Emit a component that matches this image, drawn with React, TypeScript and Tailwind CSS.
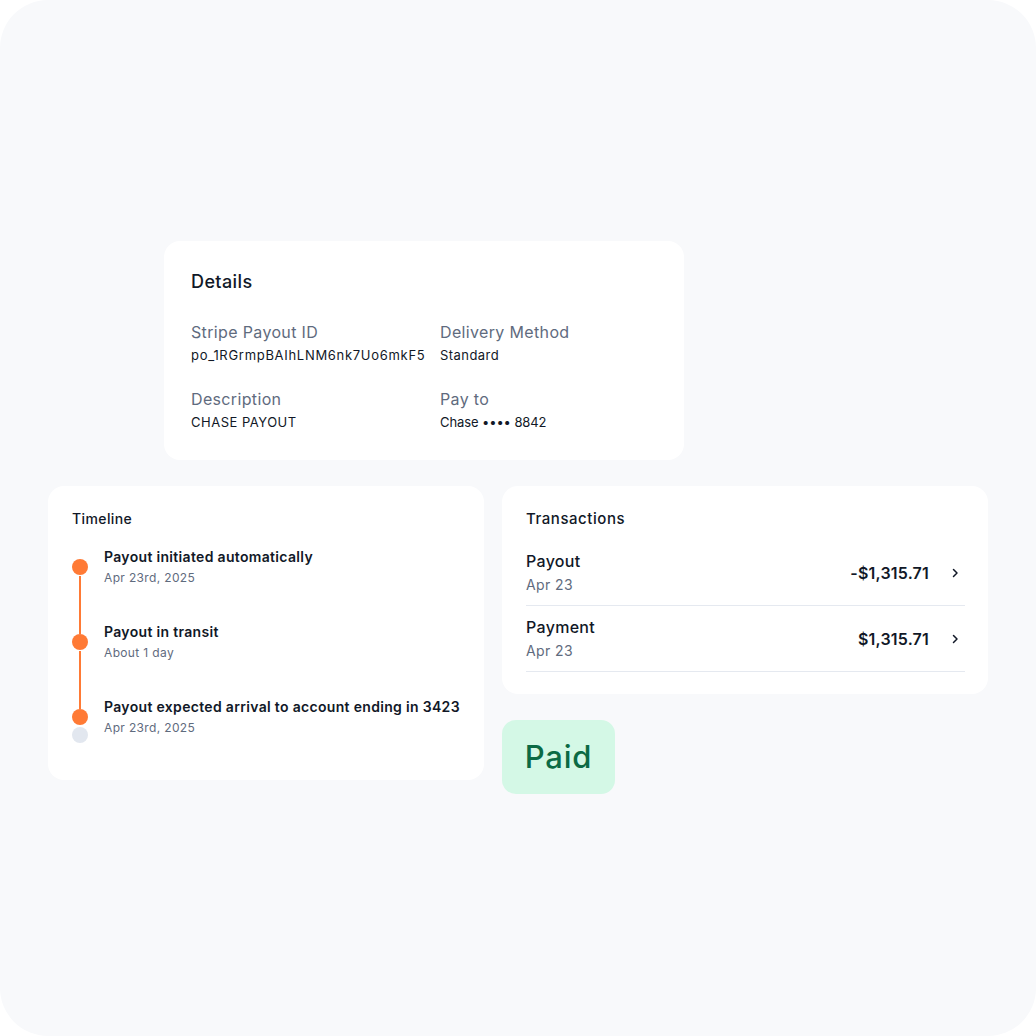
import React from "react";

const font = { fontFamily: "Inter, 'Noto Sans', sans-serif" };

function Chevron() {
  return (
    <svg width="16" height="16" viewBox="0 0 16 16" fill="none" className="ml-[19px] mr-[1px] shrink-0">
      <path d="M5.5 4.5L9 8L5.5 11.5" stroke="#111827" strokeWidth="1.5" strokeLinecap="round" strokeLinejoin="round" />
    </svg>
  );
}

const timeline = [
  { title: "Payout initiated automatically", sub: "Apr 23rd, 2025" },
  { title: "Payout in transit", sub: "About 1 day" },
  { title: "Payout expected arrival to account ending in 3423", sub: "Apr 23rd, 2025" },
];

const txns = [
  { name: "Payout", date: "Apr 23", amount: "-$1,315.71" },
  { name: "Payment", date: "Apr 23", amount: "$1,315.71" },
];

const details: [string, string, string][] = [
  ["Stripe Payout ID", "po_1RGrmpBAIhLNM6nk7Uo6mkF5", "tracking-[0.7px]"],
  ["Delivery Method", "Standard", "tracking-[0.45px]"],
  ["Description", "CHASE PAYOUT", "tracking-[0.5px]"],
  ["Pay to", "Chase •••• 8842", "tracking-[-0.1px]"],
];

export default function App() {
  return (
    <div className="w-[1036px] h-[1036px] bg-white tracking-[0.3px]" style={font}>
      <div className="w-full h-full rounded-[48px] bg-[#f8f9fb] pt-[241px] px-[48px] text-[#111827]">
        <div className="ml-[116px] w-[520px] h-[219px] rounded-[16px] bg-white pt-[29px] pl-[27px]">
          <div className="text-[18px] leading-[24px] font-medium tracking-[0.4px]">Details</div>
          <div className="mt-[27px] grid grid-cols-[249px_1fr] gap-y-[24px]">
            {details.map(([l, v, tr]) => (
              <div key={l}>
                <div className="text-[16px] leading-[22px] text-[#5f6b7e] tracking-[0.35px]">{l}</div>
                <div className={"mt-[3px] text-[13px] leading-[18px] text-[#111827] " + tr}>{v}</div>
              </div>
            ))}
          </div>
        </div>

        <div className="mt-[26px] flex gap-[18px] items-start">
          <div className="w-[436px] h-[294px] rounded-[16px] bg-white pt-[23px] px-[24px]">
            <div className="text-[14px] leading-[20px] font-medium tracking-[0.4px]">Timeline</div>
            <div className="mt-[18px] flex flex-col gap-[36px]">
              {timeline.map((t, i) => (
                <div key={i} className="flex items-center">
                  <div className="relative w-[16px] h-[16px] shrink-0">
                    <div className="w-[16px] h-[16px] rounded-full bg-[#ff7a35]" />
                    {i < timeline.length - 1 && (
                      <div className="absolute left-[7px] top-[17px] w-[2px] h-[58px] bg-[#ff7a35]" />
                    )}
                    {i === timeline.length - 1 && (
                      <div className="absolute left-0 top-[18px] w-[16px] h-[16px] rounded-full bg-[#e2e7ef]" />
                    )}
                  </div>
                  <div className="ml-[16px]">
                    <div className="text-[14px] leading-[20px] font-semibold tracking-[0.32px]">{t.title}</div>
                    <div className="mt-[3px] text-[12px] leading-[16px] text-[#5f6b7e] tracking-[0.35px]">{t.sub}</div>
                  </div>
                </div>
              ))}
            </div>
          </div>

          <div className="w-[486px]">
            <div className="h-[208px] rounded-[16px] bg-white pt-[23px] pl-[24px] pr-[23px]">
              <div className="text-[15px] leading-[20px] font-medium tracking-[0.55px]">Transactions</div>
              <div className="mt-[11px]">
                {txns.map((t) => (
                  <div key={t.name} className="flex items-center pt-[10px] pb-[10px] border-b border-[#e5e9f0]">
                    <div className="flex-1">
                      <div className="text-[16px] leading-[22px] font-medium tracking-[0.3px]">{t.name}</div>
                      <div className="mt-[3px] text-[14px] leading-[20px] text-[#5f6b7e] tracking-[0.4px]">{t.date}</div>
                    </div>
                    <div className="text-[16px] leading-[22px] font-semibold tracking-[0.2px]">{t.amount}</div>
                    <Chevron />
                  </div>
                ))}
              </div>
            </div>
            <div className="mt-[26px] w-[113px] h-[74px] rounded-[14px] bg-[#d4f8e6] flex items-center justify-center">
              <span className="text-[31px] leading-[36px] font-medium text-[#0b6a44] tracking-[0.8px]">Paid</span>
            </div>
          </div>
        </div>
      </div>
    </div>
  );
}
